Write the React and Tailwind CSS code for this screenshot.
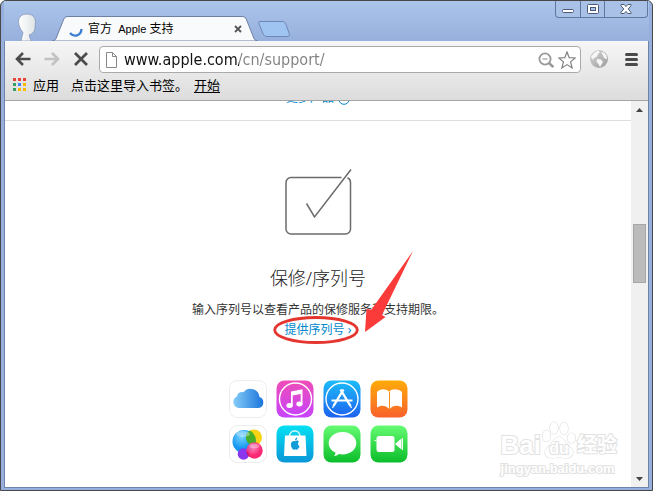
import * as React from 'react';
import { useState } from 'react';

const FONT = "font-['Noto_Sans','Noto_Sans_CJK_SC',sans-serif]";

const APPS_DOTS = [
  'bg-[#ea4335]', 'bg-[#ea4335]', 'bg-[#ea4335]',
  'bg-[#34a060]', 'bg-[#4285f4]', 'bg-[#fbb800]',
  'bg-[#34a060]', 'bg-[#fbb800]', 'bg-[#fbb800]',
];

function TitleBar() {
  return (
    <header className="flex h-10 items-start justify-between bg-linear-to-b from-[#abc5eb] to-[#97afdc] pl-2">
      <div className="flex h-full items-end">
        <svg className="h-7 w-7" viewBox="0 0 28 28" aria-hidden="true">
          <defs>
            <linearGradient id="head" x1="0" x2="1">
              <stop offset="0" stopColor="#fff" />
              <stop offset="1" stopColor="#dfe3e6" />
            </linearGradient>
          </defs>
          <path
            d="M15 1c5 0 8.500 3 8.500 8l-.5 5c0 4-2 7-5.500 7.500-.3 2 .5 4.500 2 6.500H9l2-8.500C8 16 6.500 12 6.500 8.500 6.500 4 10 1 15 1Z"
            fill="url(#head)"
            stroke="#7f91b2"
            strokeWidth=".7"
          />
        </svg>
        <div className="relative ml-3 flex h-[25px] w-[206px] items-center pl-4 pr-4">
          <svg className="absolute inset-0 h-full w-full" viewBox="0 0 206 25" preserveAspectRatio="none" aria-hidden="true">
            <path
              d="M0 25c3 0 4-2 5-5l6-15c1-3 2-4.500 5-4.500h174c3 0 4 1.500 5 4.500l6 15c1 3 2 5 5 5Z"
              fill="#f9fafb"
              stroke="#6d7fa5"
            />
          </svg>
          <svg className="relative h-4 w-4" viewBox="0 0 16 16" aria-hidden="true">
            <path d="M2 12c4 4.500 11 3 11.500-4" fill="none" stroke="#3c7fd0" strokeWidth="2.400" />
          </svg>
          <span className="relative ml-1 grow whitespace-pre text-xs text-black">
            官方{'  '}
            <span className="font-['Liberation_Sans',sans-serif] text-[11px]">Apple</span> 支持
          </span>
          <button type="button" aria-label="关闭标签页" className="relative">
            <svg className="h-2 w-2" viewBox="0 0 8 8">
              <path d="M1 1l6 6M7 1L1 7" stroke="#555" strokeWidth="1.800" />
            </svg>
          </button>
        </div>
        <button type="button" aria-label="新标签页" className="mb-1">
          <svg className="h-4 w-8" viewBox="0 0 32 16">
            <path
              d="M2 .5h22c2 0 3 .7 4 3l3.200 9c.6 2-.2 3-2 3H9c-2 0-3-1-4-3L1 3C.4 1.500.5.500 2 .500Z"
              fill="#9fc4f2"
              stroke="#6d87b5"
            />
          </svg>
        </button>
      </div>
      <div className="mr-px flex h-[17px] rounded-b border border-t-0 border-[#60779f] bg-[#a9c1e6] text-[#4a5b79]">
        <button type="button" aria-label="最小化" className="flex w-6 items-center justify-center">
          <svg className="h-3 w-3" viewBox="0 0 12 12">
            <rect x=".5" y="6.500" width="11" height="3" rx="1" fill="#fff" stroke="currentColor" />
          </svg>
        </button>
        <button type="button" aria-label="最大化" className="flex w-[25px] items-center justify-center border-x border-[#60779f]">
          <svg className="h-3 w-3" viewBox="0 0 12 12">
            <rect x=".5" y="1.500" width="11" height="9" rx="1" fill="#fff" stroke="currentColor" />
            <rect x="3.500" y="4.500" width="5" height="3" fill="#a9c1e6" stroke="currentColor" />
          </svg>
        </button>
        <button type="button" aria-label="关闭" className="flex w-[42px] items-center justify-center">
          <svg className="h-3 w-3" viewBox="0 0 12 12">
            <path
              d="M1 1.500h3.200L6 3.600l1.800-2.100H11v1.200L8.200 6 11 9.300v1.200H7.800L6 8.400l-1.800 2.100H1V9.300L3.800 6 1 2.700Z"
              fill="#fff"
              stroke="currentColor"
            />
          </svg>
        </button>
      </div>
    </header>
  );
}

function Toolbar() {
  const [url, setUrl] = useState('www.apple.com/cn/support/');

  return (
    <div className="flex h-8 items-end px-[3px]">
      <button type="button" aria-label="后退" className="mb-1 flex h-5 w-[29px] items-center justify-center">
        <svg className="h-4 w-4" viewBox="0 0 16 16" fill="none" stroke="#4c4c4c" strokeWidth="2.600">
          <path d="M15.500 8H2.500M8 2L2 8l6 6" />
        </svg>
      </button>
      <button type="button" aria-label="前进" className="mb-1 flex h-5 w-[29px] items-center justify-center">
        <svg className="h-4 w-4" viewBox="0 0 16 16" fill="none" stroke="#c2c2c2" strokeWidth="2.600">
          <path d="M.5 8h13M8 2l6 6-6 6" />
        </svg>
      </button>
      <button type="button" aria-label="停止" className="mb-1 flex h-5 w-[29px] items-center justify-center">
        <svg className="h-4 w-4" viewBox="0 0 16 16" stroke="#4c4c4c" strokeWidth="2.800">
          <path d="M2 2l12 12M14 2L2 14" />
        </svg>
      </button>
      <div className="ml-1 flex h-[27px] grow items-center rounded-sm border border-[#aaa] bg-white px-1">
        <svg className="h-4 w-4 shrink-0" viewBox="0 0 16 16" fill="#fff" stroke="#888">
          <path d="M2.500.5h6l4 4v11h-10ZM8.500.5v4h4" />
        </svg>
        <input
          type="text"
          aria-label="地址"
          value={url}
          onChange={(e) => setUrl(e.target.value)}
          className="min-w-0 grow bg-[linear-gradient(90deg,#111_119px,#808080_119px)] bg-clip-text pl-1 font-['DejaVu_Sans_Condensed','DejaVu_Sans',sans-serif] text-base leading-6 text-transparent caret-black outline-none"
        />
        <button type="button" aria-label="缩放" className="mr-1">
          <svg className="h-4 w-4" viewBox="0 0 16 16" fill="none" stroke="#999" strokeWidth="1.800">
            <circle cx="7" cy="7" r="5.600" />
            <path d="M4.500 7h5" strokeWidth="1.200" />
            <path d="M11 11l4.300 4" strokeWidth="2.600" />
          </svg>
        </button>
        <button type="button" aria-label="加入书签">
          <svg className="h-[18px] w-[18px]" viewBox="0 0 18 18" fill="#fff" stroke="#808080" strokeWidth="1.200">
            <path d="M9 1l2.200 5.600 6 .4-4.600 3.900 1.500 6L9 13.600l-5.100 3.300 1.500-6L.8 7l6-.4Z" />
          </svg>
        </button>
      </div>
      <button type="button" aria-label="扩展程序" className="mb-1 ml-2">
        <svg className="h-5 w-5" viewBox="0 0 20 20">
          <defs>
            <linearGradient id="globe" x1="0" x2="1" y1="0" y2="1">
              <stop offset="0" stopColor="#d6d6d6" />
              <stop offset="1" stopColor="#9c9c9c" />
            </linearGradient>
          </defs>
          <circle cx="10" cy="10" r="9" fill="url(#globe)" />
          <path
            d="M2 8l3-4 4-2.500 2 1.500-2 2-1.500 3L5 9l-1 2ZM12 3l3 .5 2.500 3L18 10l-2.500-.5L14 6.500ZM8 10l4 .5 2 2.500-1.500 2.500L11 18l-1.500-3-2-2Z"
            fill="#f6f6f6"
          />
        </svg>
      </button>
      <button type="button" aria-label="菜单" className="mb-[7px] ml-4 mr-[7px] flex flex-col gap-[2px]">
        <span className="h-[3px] w-[13px] rounded-sm bg-[#4a4a4a]" />
        <span className="h-[3px] w-[13px] rounded-sm bg-[#4a4a4a]" />
        <span className="h-[3px] w-[13px] rounded-sm bg-[#4a4a4a]" />
      </button>
    </div>
  );
}

function BookmarksBar() {
  return (
    <nav className="flex h-7 items-center gap-3 border-b border-[#a5a5a5] pb-1 pl-2 text-[13px] leading-4 text-black">
      <a href="#apps" className="flex items-center gap-[7px]">
        <span className="grid grid-cols-3 gap-[2px]">
          {APPS_DOTS.map((dot, i) => (
            <span key={i} className={`h-[3px] w-[3px] ${dot}`} />
          ))}
        </span>
        应用
      </a>
      <span>点击这里导入书签。</span>
      <a href="#start" className="-ml-1.5 underline underline-offset-2">开始</a>
    </nav>
  );
}

function Tile({ id, from, to, label, children }) {
  return (
    <li>
      <svg className="h-[38px] w-[38px]" viewBox="0 0 38 38" role="img" aria-label={label}>
        <defs>
          <linearGradient id={id} x1="0" x2="0" y1="0" y2="1">
            <stop offset="0" stopColor={from} />
            <stop offset="1" stopColor={to} />
          </linearGradient>
        </defs>
        <rect
          x=".5"
          y=".5"
          width="37"
          height="37"
          rx="8"
          fill={`url(#${id})`}
          stroke={from === '#ffffff' ? '#ececec' : 'none'}
        />
        {children}
      </svg>
    </li>
  );
}

function AppIcons() {
  return (
    <ul className="grid grid-cols-4 gap-x-[9px] gap-y-[7px]">
      <Tile id="icloud" label="iCloud" from="#ffffff" to="#ffffff">
        <defs>
          <linearGradient id="cloud" x1="0" x2="1">
            <stop offset="0" stopColor="#86cdf8" />
            <stop offset="1" stopColor="#1a74dc" />
          </linearGradient>
        </defs>
        <path
          d="M10 28a6 6 0 0 1-2-11.500 5 5 0 0 1 6.500-4.300A9 9 0 0 1 30.500 17 5.700 5.700 0 0 1 29.500 28Z"
          fill="url(#cloud)"
        />
        <path d="M14.500 12.200A9 9 0 0 0 14 18M8 16.500a5 5 0 0 0 2 3.500" fill="none" stroke="#5cb0ee" strokeWidth=".6" />
      </Tile>
      <Tile id="itunes" label="iTunes" from="#ef4db6" to="#c643fc">
        <circle cx="19.500" cy="19" r="16" fill="none" stroke="#fff" strokeWidth="1.400" />
        <path d="M15 11.500l11.500-2.300v15.300h-1.800V14l-8 1.600V26h-1.700Z" fill="#fff" />
        <ellipse cx="13.600" cy="25.600" rx="3.200" ry="2.500" fill="#fff" />
        <ellipse cx="23.400" cy="24" rx="3.100" ry="2.400" fill="#fff" />
      </Tile>
      <Tile id="appstore" label="App Store" from="#1cbcf8" to="#1d62f0">
        <circle cx="19" cy="19" r="16" fill="none" stroke="#fff" strokeWidth="1.400" />
        <path d="M17.500 9.500L27.500 26M20.500 9.500L10.500 26" stroke="#fff" strokeWidth="2.400" />
        <path d="M8.500 20.500h21" stroke="#fff" strokeWidth="2" />
        <path d="M10.500 26l-1 2M27.500 26l1 2" stroke="#fff" strokeWidth="1.200" />
      </Tile>
      <Tile id="ibooks" label="iBooks" from="#ffab09" to="#f8622c">
        <path
          d="M7 12c3-3.500 8.500-3.800 12-.5 3.500-3.300 9.500-3 13 .5v15.500c-4-2.500-9-2.500-12 1.200l-.5.500-.5-.5c-3.500-3.700-8-3.700-12-1.200Z"
          fill="#fff"
        />
        <path d="M19.500 11.500V29" stroke="#fc8c1a" strokeWidth="1" />
      </Tile>
      <Tile id="gamecenter" label="Game Center" from="#ffffff" to="#ffffff">
        <defs>
          <radialGradient id="gcBlue" cx=".4" cy=".3">
            <stop offset="0" stopColor="#75d4fc" />
            <stop offset="1" stopColor="#1496f0" />
          </radialGradient>
          <radialGradient id="gcPink" cx=".4" cy=".3">
            <stop offset="0" stopColor="#ff86c0" />
            <stop offset="1" stopColor="#fa1668" />
          </radialGradient>
        </defs>
        <circle cx="25" cy="12.500" r="8" fill="#f8d314" />
        <circle cx="15" cy="16.500" r="11.500" fill="url(#gcBlue)" />
        <path d="M17.200 14.500a8 8 0 0 1 4-9 11.500 11.500 0 0 1 4.500 15 8 8 0 0 1-8.500-6Z" fill="#47ae28" />
        <circle cx="14.500" cy="29" r="5.800" fill="#8a35ee" />
        <circle cx="25.500" cy="25.500" r="8.200" fill="url(#gcPink)" fillOpacity=".92" />
        <path d="M19 30.500a8 8 0 0 1-1.500-4 5.800 5.800 0 0 1 2.500 4.500Z" fill="#b51a78" />
        <ellipse cx="14" cy="9" rx="7" ry="3" fill="#fff" opacity=".35" />
        <ellipse cx="25.500" cy="21" rx="5" ry="2.200" fill="#fff" opacity=".3" />
      </Tile>
      <Tile id="store" label="Apple Store" from="#03e0f2" to="#0b96d8">
        <path d="M13.500 11.500C13.500 4 24 4 24 11.500" fill="none" stroke="#c9f4fb" strokeWidth="1.600" />
        <path d="M9 10.500h20.500l1 20.500H8Z" fill="#fff" />
        <path
          d="M19 16.200c1.600-1.100 3.300-.7 4 .5-1.700 1.200-1.400 3.600.6 4.400-.7 2-2 3.900-3.200 3.700-.9-.4-1.300-.4-2.200 0-1.700.3-3.600-3.500-3.200-6 .4-2.300 2.300-3.300 4-2.600Z"
          fill="#109bd9"
        />
        <path d="M19 15.500c-.1-1.500 1-2.700 2.300-2.900.1 1.500-.9 2.800-2.300 2.900Z" fill="#109bd9" />
      </Tile>
      <Tile id="messages" label="Messages" from="#65fb72" to="#0bbd2a">
        <path
          d="M19.500 7c7.700 0 13.800 4.900 13.800 11.200S27.200 29.400 19.500 29.400c-1.200 0-2.500-.1-3.600-.4-1.300 1.200-3.100 2-5 2 1-.9 1.600-2 1.500-3.400-4.100-2-6.700-5.400-6.700-9.400C5.700 11.900 11.800 7 19.500 7Z"
          fill="#fff"
        />
      </Tile>
      <Tile id="facetime" label="FaceTime" from="#65fb72" to="#0bbd2a">
        <rect x="6.500" y="11" width="18" height="16" rx="2.500" fill="#fff" />
        <path d="M25.500 18.500l6-5v11l-6-5Z" fill="#fff" />
        <path d="M32.500 13.200v11.800" stroke="#fff" />
        <path d="M4.500 15.500h2" stroke="#fff" />
      </Tile>
    </ul>
  );
}

function SerialNumber() {
  return (
    <section className="flex flex-col items-center pt-12">
      <svg className="h-[67px] w-[67px]" viewBox="0 0 67 67" fill="none" stroke="#6b6b6b" strokeWidth="1.500" aria-hidden="true">
        <path d="M56.500 8.500H6a5 5 0 0 0-5 5V60a5 5 0 0 0 5 5h54.500a5 5 0 0 0 5-5V13.500c0-2-1-3.800-3-4.700" />
        <path d="M21.500 34.500l8 13.500L66 .5" />
      </svg>
      <h2 className="mt-7 text-lg leading-7 font-light text-[#222]">保修/序列号</h2>
      <div className="relative mt-2 flex flex-col items-center text-xs leading-5 text-[#333]">
        <p>输入序列号以查看产品的保修服务和支持期限。</p>
        <a href="#serial" className="relative whitespace-pre text-[#0088cc]">
          提供序列号 ›
          <svg className="absolute -top-1 -left-3 h-7 w-[86px]" viewBox="0 0 86 28" aria-hidden="true">
            <ellipse cx="43" cy="14" rx="41.300" ry="12.500" fill="none" stroke="#e5352f" strokeWidth="2.800" />
          </svg>
        </a>
        {/* arrow pointing down at the link */}
        <svg className="absolute right-[31px] bottom-2 h-[81px] w-12" viewBox="0 0 48 81" aria-hidden="true">
          <path d="M48 0L17 64l3.500 2L0 81l1.500-23 5 .5Z" fill="#fb3b3a" />
        </svg>
      </div>
    </section>
  );
}

const OUTLINE = 'text-white [-webkit-text-stroke:2px_#e2e2e2] [paint-order:stroke_fill]';

function Watermark() {
  return (
    <div className={`absolute right-3.5 bottom-2 font-['Liberation_Sans','Noto_Sans_CJK_SC',sans-serif] font-bold ${OUTLINE}`}>
      <div className="flex items-end">
        <span className="text-[26px] leading-7">Bai</span>
        <span className="relative flex h-[38px] w-9 items-end justify-center">
          <svg className="absolute inset-0 h-full w-full" viewBox="0 0 36 38" fill="#fff" stroke="#dedede" strokeWidth="1.200" aria-hidden="true">
            <ellipse cx="5.500" cy="15" rx="4" ry="5.500" />
            <ellipse cx="13" cy="7" rx="4" ry="6" />
            <ellipse cx="23" cy="7.500" rx="4" ry="6" />
            <ellipse cx="30.500" cy="17" rx="4" ry="5" />
            <path d="M18 16c4 0 5 3 8 7s6 4 6 8-3 6-7 6c-3 0-4-.5-7-.5s-4 .5-7 .5c-4 0-7-2-7-6s3-4 6-8 4-7 8-7Z" />
          </svg>
          <span className="relative text-base leading-5">du</span>
        </span>
        <span className="text-xl leading-7">经验</span>
      </div>
      <div className="text-[13px] leading-5">jingyan.baidu.com</div>
    </div>
  );
}

function Scrollbar() {
  return (
    <div className="flex w-[17px] flex-col items-center bg-[#f0f0f0] px-[2px]">
      <button type="button" aria-label="向上滚动" className="flex h-[17px] items-center">
        <svg className="h-1 w-[7px]" viewBox="0 0 7 4">
          <path d="M0 4l3.500-4L7 4Z" fill="#444" />
        </svg>
      </button>
      <div className="grow-[106]" />
      <div className="h-[59px] w-full border border-[#a6a6a6] bg-[#bbb]" />
      <div className="grow-[186]" />
      <button type="button" aria-label="向下滚动" className="flex h-[17px] items-center">
        <svg className="h-1 w-[7px]" viewBox="0 0 7 4">
          <path d="M0 0h7L3.500 4Z" fill="#444" />
        </svg>
      </button>
    </div>
  );
}

export default function App() {
  return (
    <div className={`flex min-h-screen flex-col rounded-t-md border border-[#484848] bg-[#97afdc] px-[3px] pb-[2px] ${FONT}`}>
      <TitleBar />
      <div className="flex grow flex-col border border-t-0 border-[#7083a8] bg-white">
        <div className="bg-linear-to-b from-[#f6f6f6] to-[#dcdcdc]">
          <Toolbar />
          <BookmarksBar />
        </div>
        <div className="flex grow">
          <main className="relative grow pb-6">
            <div className="h-5 border-b border-[#ddd]">
              {/* only the foot of this line is left below the toolbar */}
              <div className="flex h-1 items-end justify-center overflow-hidden">
                <a href="#more" className="flex items-end gap-1 text-xs leading-[14px] text-[#0088cc]">
                  更多产品
                  <svg className="h-3 w-3" viewBox="0 0 12 12" fill="none" stroke="#0088cc">
                    <circle cx="6" cy="6" r="5.300" />
                  </svg>
                </a>
              </div>
            </div>
            <SerialNumber />
            <div className="mt-10 flex justify-center">
              <AppIcons />
            </div>
            <Watermark />
          </main>
          <Scrollbar />
        </div>
      </div>
    </div>
  );
}
